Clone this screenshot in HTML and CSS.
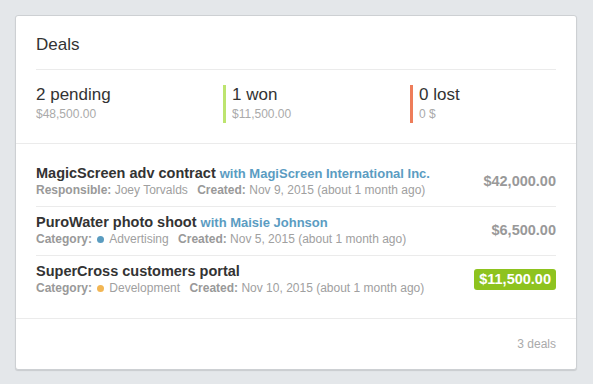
FILE: index.html
```html
<!DOCTYPE html>
<html lang="en">
<head>
    <meta charset="UTF-8">
    <meta name="viewport" content="width=device-width, initial-scale=1.0">
    <title>Deals</title>
    <link rel="stylesheet" href="styles.css">
</head>
<body>
    <div class="card">
        <div class="card-header">
            <h1>Deals</h1>
            <div class="stats">
                <div class="stat">
                    <div class="stat-count">2 pending</div>
                    <div class="stat-amount">$48,500.00</div>
                </div>
                <div class="stat stat-won">
                    <div class="stat-count">1 won</div>
                    <div class="stat-amount">$11,500.00</div>
                </div>
                <div class="stat stat-lost">
                    <div class="stat-count">0 lost</div>
                    <div class="stat-amount">0 $</div>
                </div>
            </div>
        </div>

        <ul class="deals">
            <li class="deal">
                <div class="deal-info">
                    <div class="deal-title">MagicScreen adv contract <span class="deal-with">with MagiScreen International Inc.</span></div>
                    <div class="deal-meta">
                        <span class="meta-item"><b>Responsible:</b> Joey Torvalds</span>
                        <span class="meta-item"><b>Created:</b> Nov 9, 2015 (about 1 month ago)</span>
                    </div>
                </div>
                <div class="deal-value">$42,000.00</div>
            </li>
            <li class="deal">
                <div class="deal-info">
                    <div class="deal-title">PuroWater photo shoot <span class="deal-with">with Maisie Johnson</span></div>
                    <div class="deal-meta">
                        <span class="meta-item"><b>Category:</b> <span class="dot dot-blue"></span>Advertising</span>
                        <span class="meta-item"><b>Created:</b> Nov 5, 2015 (about 1 month ago)</span>
                    </div>
                </div>
                <div class="deal-value">$6,500.00</div>
            </li>
            <li class="deal">
                <div class="deal-info">
                    <div class="deal-title">SuperCross customers portal</div>
                    <div class="deal-meta">
                        <span class="meta-item"><b>Category:</b> <span class="dot dot-orange"></span>Development</span>
                        <span class="meta-item"><b>Created:</b> Nov 10, 2015 (about 1 month ago)</span>
                    </div>
                </div>
                <div class="deal-value deal-value-won">$11,500.00</div>
            </li>
        </ul>

        <div class="card-footer">3 deals</div>
    </div>
</body>
</html>
```

FILE: styles.css
```css
body {
    font-family: "Liberation Sans", Arial, sans-serif;
    background-color: #e4e7ea;
    margin: 0;
    padding: 15px;
    color: #333;
}
.card {
    width: 560px;
    background-color: #fff;
    border: 1px solid #cdd0d3;
    border-radius: 3px;
    box-shadow: 0 1px 1px rgba(0, 0, 0, 0.12);
}
.card-header {
    padding: 19px 20px 20px;
    border-bottom: 1px solid #ebebeb;
}
h1 {
    font-size: 17px;
    font-weight: normal;
    line-height: 20px;
    margin: 0;
    padding-bottom: 14px;
    border-bottom: 1px solid #ebebeb;
}
.stats {
    display: grid;
    grid-template-columns: 187px 187px 1fr;
    padding-top: 15px;
}
.stat-count {
    font-size: 17px;
    line-height: 20px;
}
.stat-amount {
    font-size: 12px;
    line-height: 18px;
    color: #aaa;
}
.stat-won,
.stat-lost {
    border-left: 3px solid #bde46f;
    padding-left: 6px;
}
.stat-lost {
    border-left-color: #ee7d5a;
}
.deals {
    list-style-type: none;
    margin: 0;
    padding: 14px 20px 14px;
    border-bottom: 1px solid #ebebeb;
}
.deal {
    display: flex;
    align-items: center;
    justify-content: space-between;
    padding: 6px 0 8px;
    border-bottom: 1px solid #ebebeb;
}
.deal:last-child {
    border-bottom: none;
}
.deal-title {
    font-size: 14.5px;
    font-weight: bold;
    line-height: 18px;
    color: #333;
}
.deal-with {
    font-size: 13px;
    line-height: 1;
    color: #5b9cc2;
}
.deal-meta {
    font-size: 12px;
    line-height: 16px;
    color: #a0a0a0;
}
.deal-meta b {
    color: #999;
}
.meta-item {
    margin-right: 6px;
}
.dot {
    display: inline-block;
    width: 7px;
    height: 7px;
    border-radius: 50%;
    margin: 0 5px 0 2px;
    vertical-align: 0;
}
.dot-blue {
    background-color: #5a9cc0;
}
.dot-orange {
    background-color: #f2b654;
}
.deal-value {
    font-size: 14.5px;
    font-weight: bold;
    color: #999;
    line-height: 21px;
}
.deal-value-won {
    background-color: #8ec31f;
    color: #fff;
    padding: 0 5px;
    border-radius: 3px;
}
.card-footer {
    padding: 17px 20px;
    font-size: 12px;
    line-height: 16px;
    color: #aaa;
    text-align: right;
}
```
